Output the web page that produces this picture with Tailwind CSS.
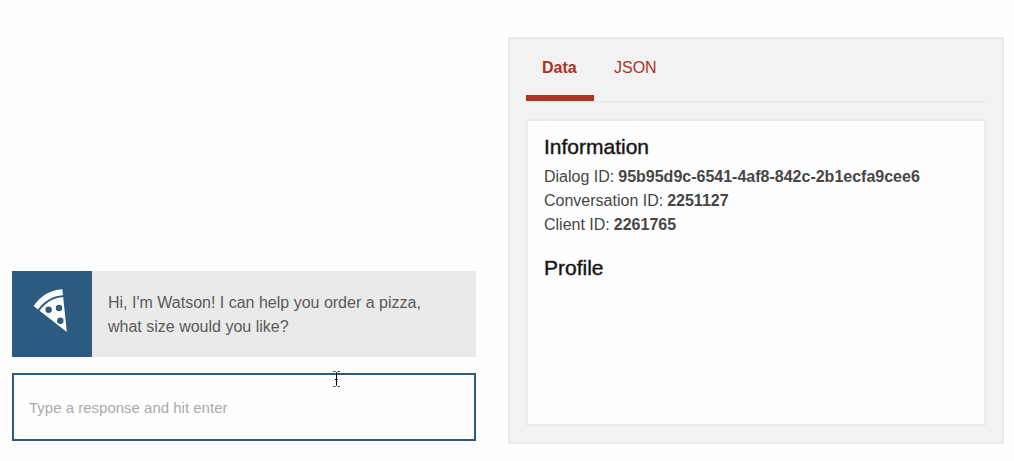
<!DOCTYPE html>
<html lang="en">
<head>
<meta charset="utf-8">
<meta name="viewport" content="width=device-width, initial-scale=1">
<title>Watson Pizza Dialog</title>
<script src="https://cdn.jsdelivr.net/npm/@tailwindcss/browser@4"></script>
</head>
<body class="bg-[#fefefe] font-['Liberation_Sans',Arial,sans-serif] text-base text-[#464646]">
<main class="grid min-h-screen grid-cols-[29fr_31fr] gap-8 pt-[37px] pr-2.5 pb-[17px] pl-3">
  <section class="flex flex-col justify-end gap-4 pb-[3px]" aria-label="Conversation">
    <div class="flex bg-[#eaeaea]">
      <div class="flex w-20 shrink-0 justify-center bg-[#2d5a80] pt-4">
        <svg class="size-12" viewBox="0 0 48 48" fill="#fefefe" aria-hidden="true">
          <path d="M5.6 19C12.5 8.8 22 3 34.4 2.2L35 8.2C24.5 8.8 16 14 10 22.6Z"/>
          <path fill-rule="evenodd" d="M11.6 23.8C17.5 15.8 25.5 10.8 35.2 10.1L38.8 45ZM23.8 22.8a3.2 3.2 0 1 0-6.4 0a3.2 3.2 0 1 0 6.4 0ZM34.2 21a3.2 3.2 0 1 0-6.4 0a3.2 3.2 0 1 0 6.4 0ZM35.5 33.8a3.2 3.2 0 1 0-6.4 0a3.2 3.2 0 1 0 6.4 0Z"/>
        </svg>
      </div>
      <p class="px-4 pt-5 pb-[18px] leading-6 text-[#5a5a5a]">Hi, I'm Watson! I can help you order a pizza,<br>what size would you like?</p>
    </div>
    <div class="relative">
      <input type="text" aria-label="Response" placeholder="Type a response and hit enter" class="block h-[68px] w-full border-2 border-[#2d5a80] bg-[#fefefe] px-[15px] text-[15px] outline-none placeholder:text-[#aaaaaa]">
      <svg class="absolute -top-0.5 left-[320px] h-4 w-[9px]" viewBox="0 0 9 16" fill="none" aria-hidden="true">
        <path d="M1 .5H3.5L4.5 1.5L5.5 .5H8M1 15.5H3.5L4.5 14.5L5.5 15.5H8" stroke="#555"/>
        <path d="M4.5 1.5V14.5M3 8.5H6" stroke="#000"/>
      </svg>
    </div>
  </section>
  <section class="flex flex-col border-2 border-[#eaeaea] bg-[#f2f2f2] px-4 pb-4" aria-label="Dialog data">
    <div role="tablist" class="flex gap-1 border-b-2 border-[#eaeaea] text-[#a9341f]">
      <button type="button" role="tab" aria-selected="true" aria-controls="data-panel" id="data-tab" class="h-[62px] min-w-[68px] border-b-[6px] border-[#a9341f] px-4 pt-0.5 text-left font-bold">Data</button>
      <button type="button" role="tab" aria-selected="false" class="h-[62px] border-b-[6px] border-transparent px-4 pt-0.5">JSON</button>
    </div>
    <div role="tabpanel" id="data-panel" aria-labelledby="data-tab" class="mt-4 grow border-2 border-[#eaeaea] bg-[#fefefe] px-4 py-3">
      <h2 class="mb-1 text-[21px] leading-7 text-[#121212] [-webkit-text-stroke:1px_rgb(18_18_18/40%)]">Information</h2>
      <dl class="leading-6">
        <div class="flex gap-1"><dt>Dialog ID:</dt><dd class="font-bold">95b95d9c-6541-4af8-842c-2b1ecfa9cee6</dd></div>
        <div class="flex gap-1"><dt>Conversation ID:</dt><dd class="font-bold">2251127</dd></div>
        <div class="flex gap-1"><dt>Client ID:</dt><dd class="font-bold">2261765</dd></div>
      </dl>
      <h2 class="mt-[17px] text-[21px] leading-7 text-[#121212] [-webkit-text-stroke:1px_rgb(18_18_18/40%)]">Profile</h2>
    </div>
  </section>
</main>
</body>
</html>
